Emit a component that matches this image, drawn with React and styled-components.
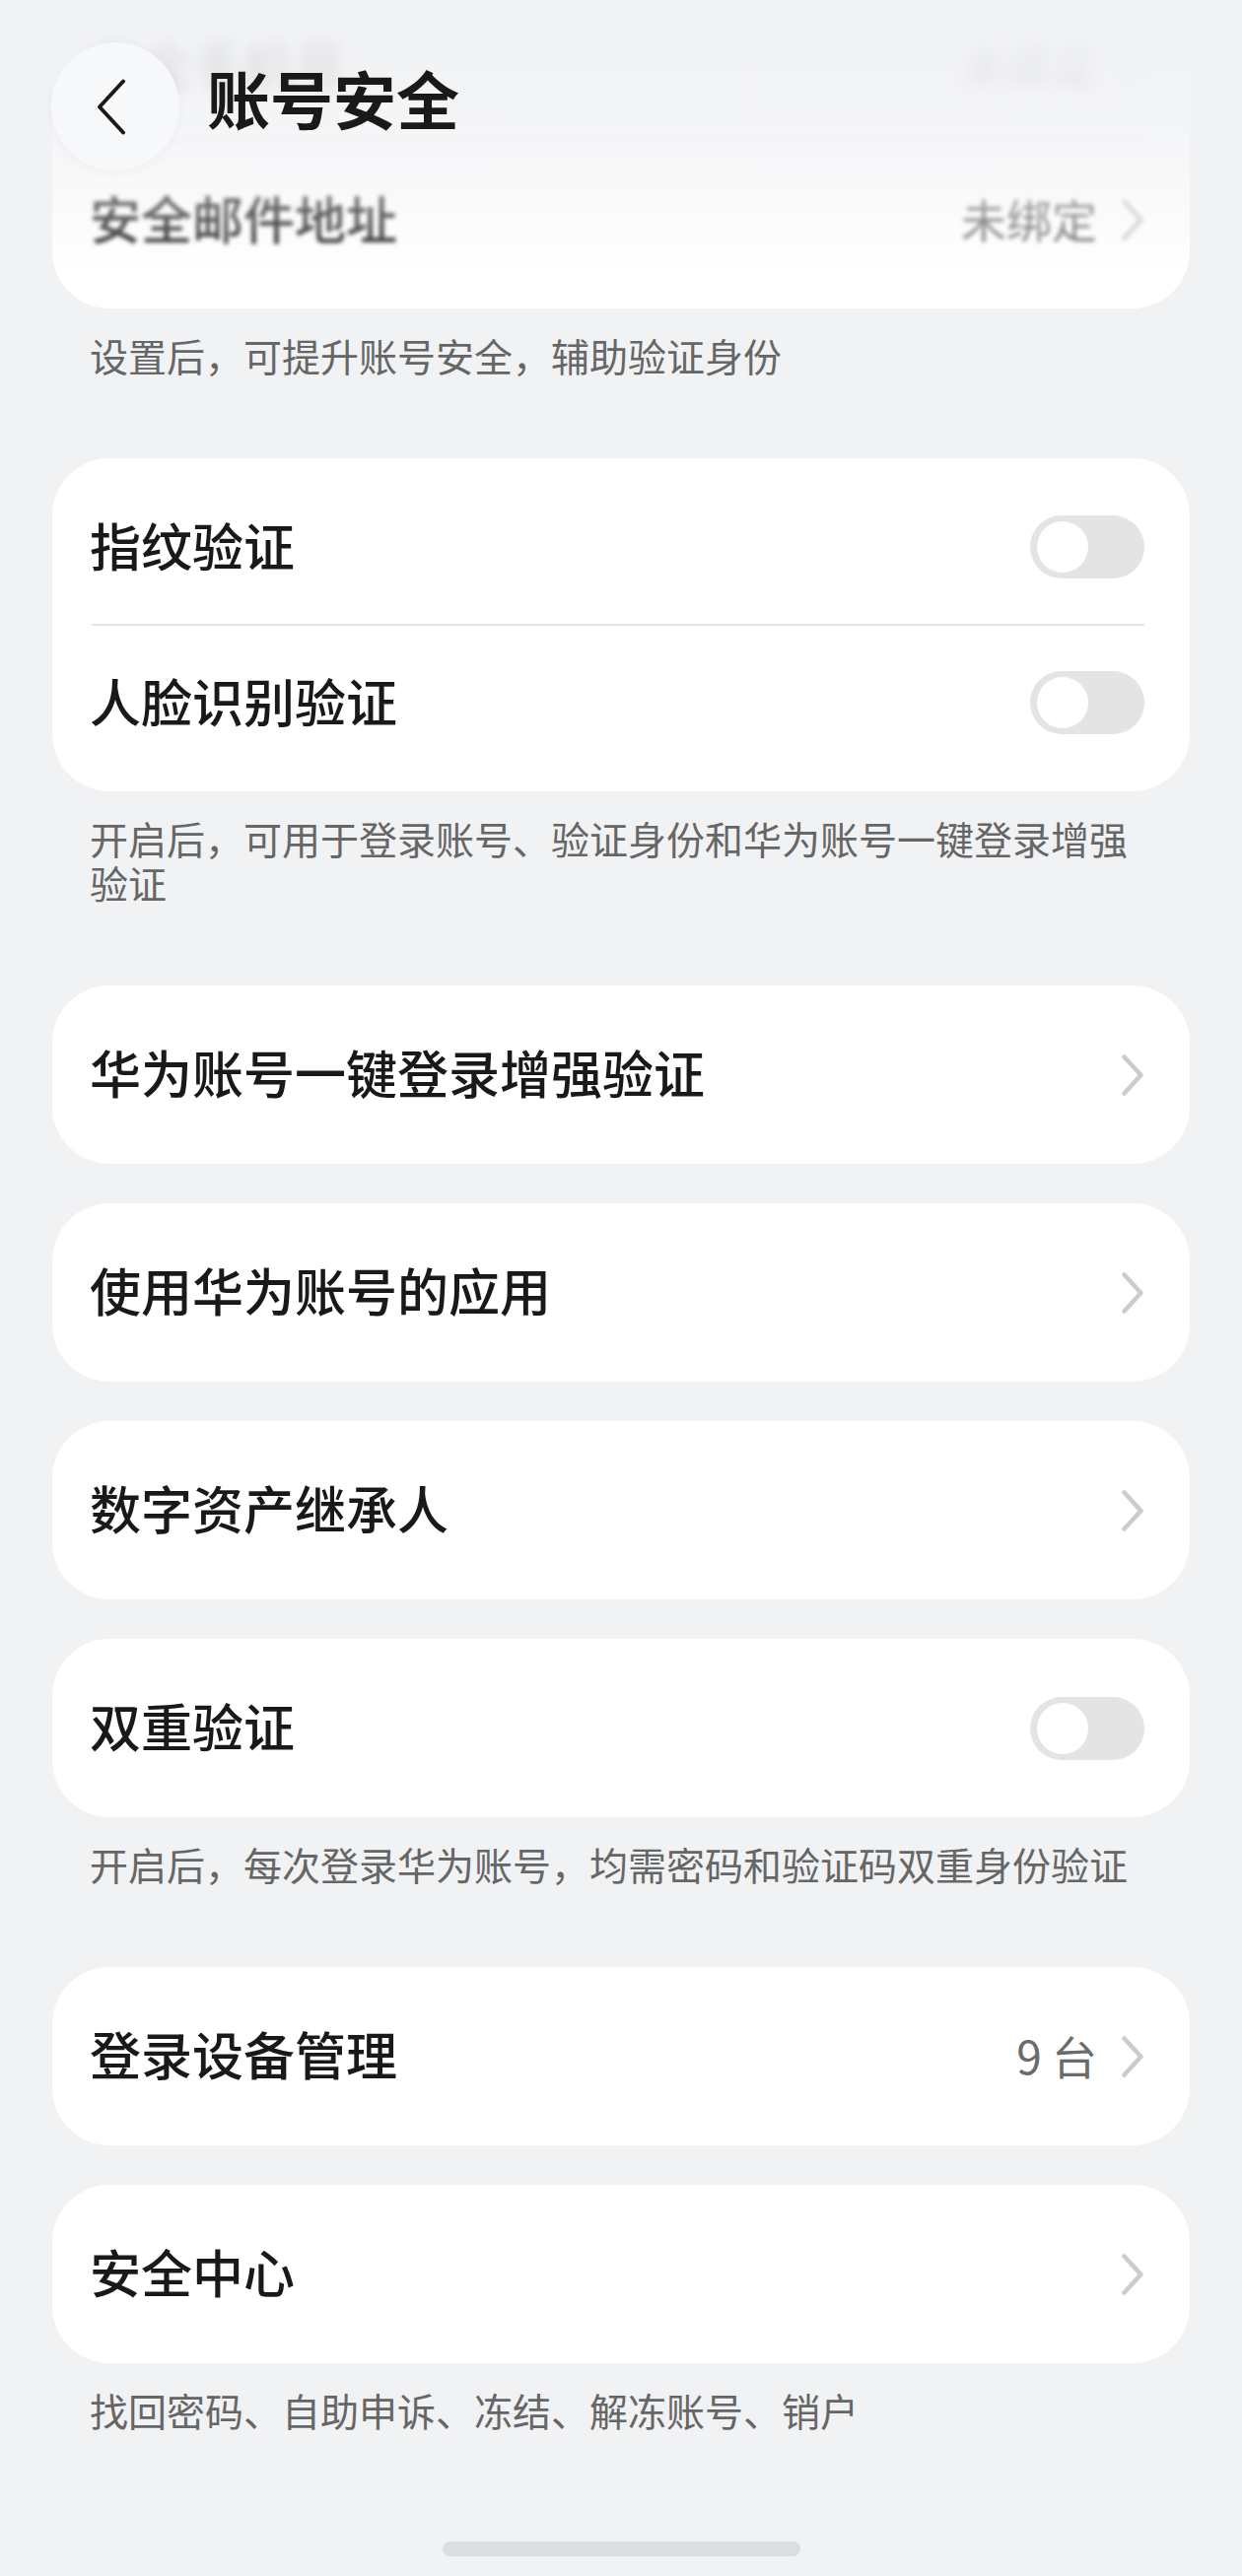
import React from "react";
import styled, { createGlobalStyle } from "styled-components";

const GlobalStyle = createGlobalStyle`
  html, body { margin: 0; padding: 0; background: #f1f2f4; }
  body { font-family: "Noto Sans CJK SC", "Noto Sans", sans-serif; }
  * { box-sizing: border-box; }
`;

const Page = styled.div`
  position: relative;
  width: 1260px;
  height: 2614px;
  overflow: hidden;
  background: #f1f2f4;
`;

const TopBar = styled.header`
  position: absolute;
  top: 0;
  left: 0;
  right: 0;
  height: 280px;
  z-index: 2;
  display: flex;
  align-items: flex-start;
  gap: 28px;
  padding: 43px 0 0 52px;
  background: linear-gradient(
    180deg,
    rgba(241, 242, 244, 0.96) 0px,
    rgba(241, 242, 244, 0.9) 70px,
    rgba(241, 242, 244, 0.7) 145px,
    rgba(241, 242, 244, 0.3) 222px,
    rgba(241, 242, 244, 0) 280px
  );
`;

const BackButton = styled.button`
  width: 130px;
  height: 130px;
  flex: none;
  border: none;
  border-radius: 50%;
  background: #f7f8f9;
  box-shadow: 0 2px 12px rgba(0, 0, 0, 0.035);
  display: flex;
  align-items: center;
  justify-content: center;
  padding: 0 8px 0 0;
`;

const Title = styled.h1`
  margin: 0;
  height: 130px;
  display: flex;
  align-items: center;
  padding-bottom: 20px;
  font-size: 64px;
  font-weight: 700;
  color: #191919;
  letter-spacing: 0;
`;

const Content = styled.main`
  display: flex;
  flex-direction: column;
  gap: 40px;
  padding: 0 53px;
  margin-top: -25px;
`;

const Group = styled.section`
  display: flex;
  flex-direction: column;
`;

const Card = styled.div`
  background: #ffffff;
  border-radius: 58px;
  padding: ${(p) => p.$pad || 0}px 0;
  overflow: hidden;
`;

const Row = styled.div`
  display: flex;
  align-items: center;
  height: ${(p) => p.$h}px;
  padding: 0 46px 0 38px;
  filter: ${(p) => (p.$blur ? `blur(${p.$blur}px)` : "none")};
`;

const Label = styled.span`
  flex: 1;
  font-size: 52px;
  font-weight: 500;
  line-height: 1;
  padding-bottom: 5px;
  color: #191919;
  white-space: nowrap;
`;

const Value = styled.span`
  font-size: 46px;
  line-height: 1;
  padding-bottom: 4px;
  color: #6b6b6b;
  margin-right: 24px;
  white-space: nowrap;
`;

const Divider = styled.div`
  height: 2px;
  background: #e2e2e2;
  margin: 0 46px 0 40px;
  filter: ${(p) => (p.$blur ? `blur(${p.$blur}px)` : "none")};
  opacity: ${(p) => (p.$blur ? 0.5 : 1)};
`;

const Note = styled.p`
  margin: 25px 0 42px;
  padding: 0 40px 0 38px;
  font-size: 39px;
  line-height: 45px;
  color: #666666;
`;

const Track = styled.div`
  width: 116px;
  height: 64px;
  flex: none;
  border-radius: 32px;
  background: #e4e4e4;
  padding: 6px 7px;
  display: flex;
  justify-content: ${(p) => (p.$on ? "flex-end" : "flex-start")};
`;

const Knob = styled.div`
  width: 52px;
  height: 52px;
  border-radius: 50%;
  background: #ffffff;
`;

const HomeBar = styled.div`
  position: absolute;
  left: 50%;
  bottom: 20px;
  width: 363px;
  height: 15px;
  margin-left: -181px;
  border-radius: 8px;
  background: #dcdde0;
`;

const Chevron = () => (
  <svg width="24" height="44" viewBox="0 0 24 44" fill="none">
    <path
      d="M3.5 3.5 L20.5 22 L3.5 40.5"
      stroke="#cccccc"
      strokeWidth="4.6"
      strokeLinecap="round"
      strokeLinejoin="round"
    />
  </svg>
);

const BackIcon = () => (
  <svg width="32" height="57" viewBox="0 0 32 57" fill="none">
    <path
      d="M28 2.5 L4 28.5 L28 54.5"
      stroke="#1a1a1a"
      strokeWidth="4"
      strokeLinecap="round"
      strokeLinejoin="round"
    />
  </svg>
);

const Toggle = ({ on }) => (
  <Track $on={on}>
    <Knob />
  </Track>
);

const NavRow = ({ label, value, h = 181, blur }) => (
  <Row $h={h} $blur={blur}>
    <Label>{label}</Label>
    {value && <Value>{value}</Value>}
    <Chevron />
  </Row>
);

const SwitchRow = ({ label, h = 181 }) => (
  <Row $h={h}>
    <Label>{label}</Label>
    <Toggle on={false} />
  </Row>
);

export default function App() {
  return (
    <Page>
      <GlobalStyle />
      <TopBar>
        <BackButton aria-label="返回">
          <BackIcon />
        </BackButton>
        <Title>账号安全</Title>
      </TopBar>

      <Content>
        <Group>
          <Card $pad={12}>
            <NavRow label="安全手机号" value="未绑定" h={156} blur={7} />
            <Divider $blur={2} />
            <NavRow label="安全邮件地址" value="未绑定" h={156} blur={2} />
          </Card>
          <Note>设置后，可提升账号安全，辅助验证身份</Note>
        </Group>

        <Group>
          <Card $pad={12}>
            <SwitchRow label="指纹验证" h={156} />
            <Divider />
            <SwitchRow label="人脸识别验证" h={156} />
          </Card>
          <Note>开启后，可用于登录账号、验证身份和华为账号一键登录增强验证</Note>
        </Group>

        <Card>
          <NavRow label="华为账号一键登录增强验证" />
        </Card>

        <Card>
          <NavRow label="使用华为账号的应用" />
        </Card>

        <Card>
          <NavRow label="数字资产继承人" />
        </Card>

        <Group>
          <Card>
            <SwitchRow label="双重验证" />
          </Card>
          <Note>开启后，每次登录华为账号，均需密码和验证码双重身份验证</Note>
        </Group>

        <Card>
          <NavRow label="登录设备管理" value="9 台" />
        </Card>

        <Group>
          <Card>
            <NavRow label="安全中心" />
          </Card>
          <Note>找回密码、自助申诉、冻结、解冻账号、销户</Note>
        </Group>
      </Content>

      <HomeBar />
    </Page>
  );
}
